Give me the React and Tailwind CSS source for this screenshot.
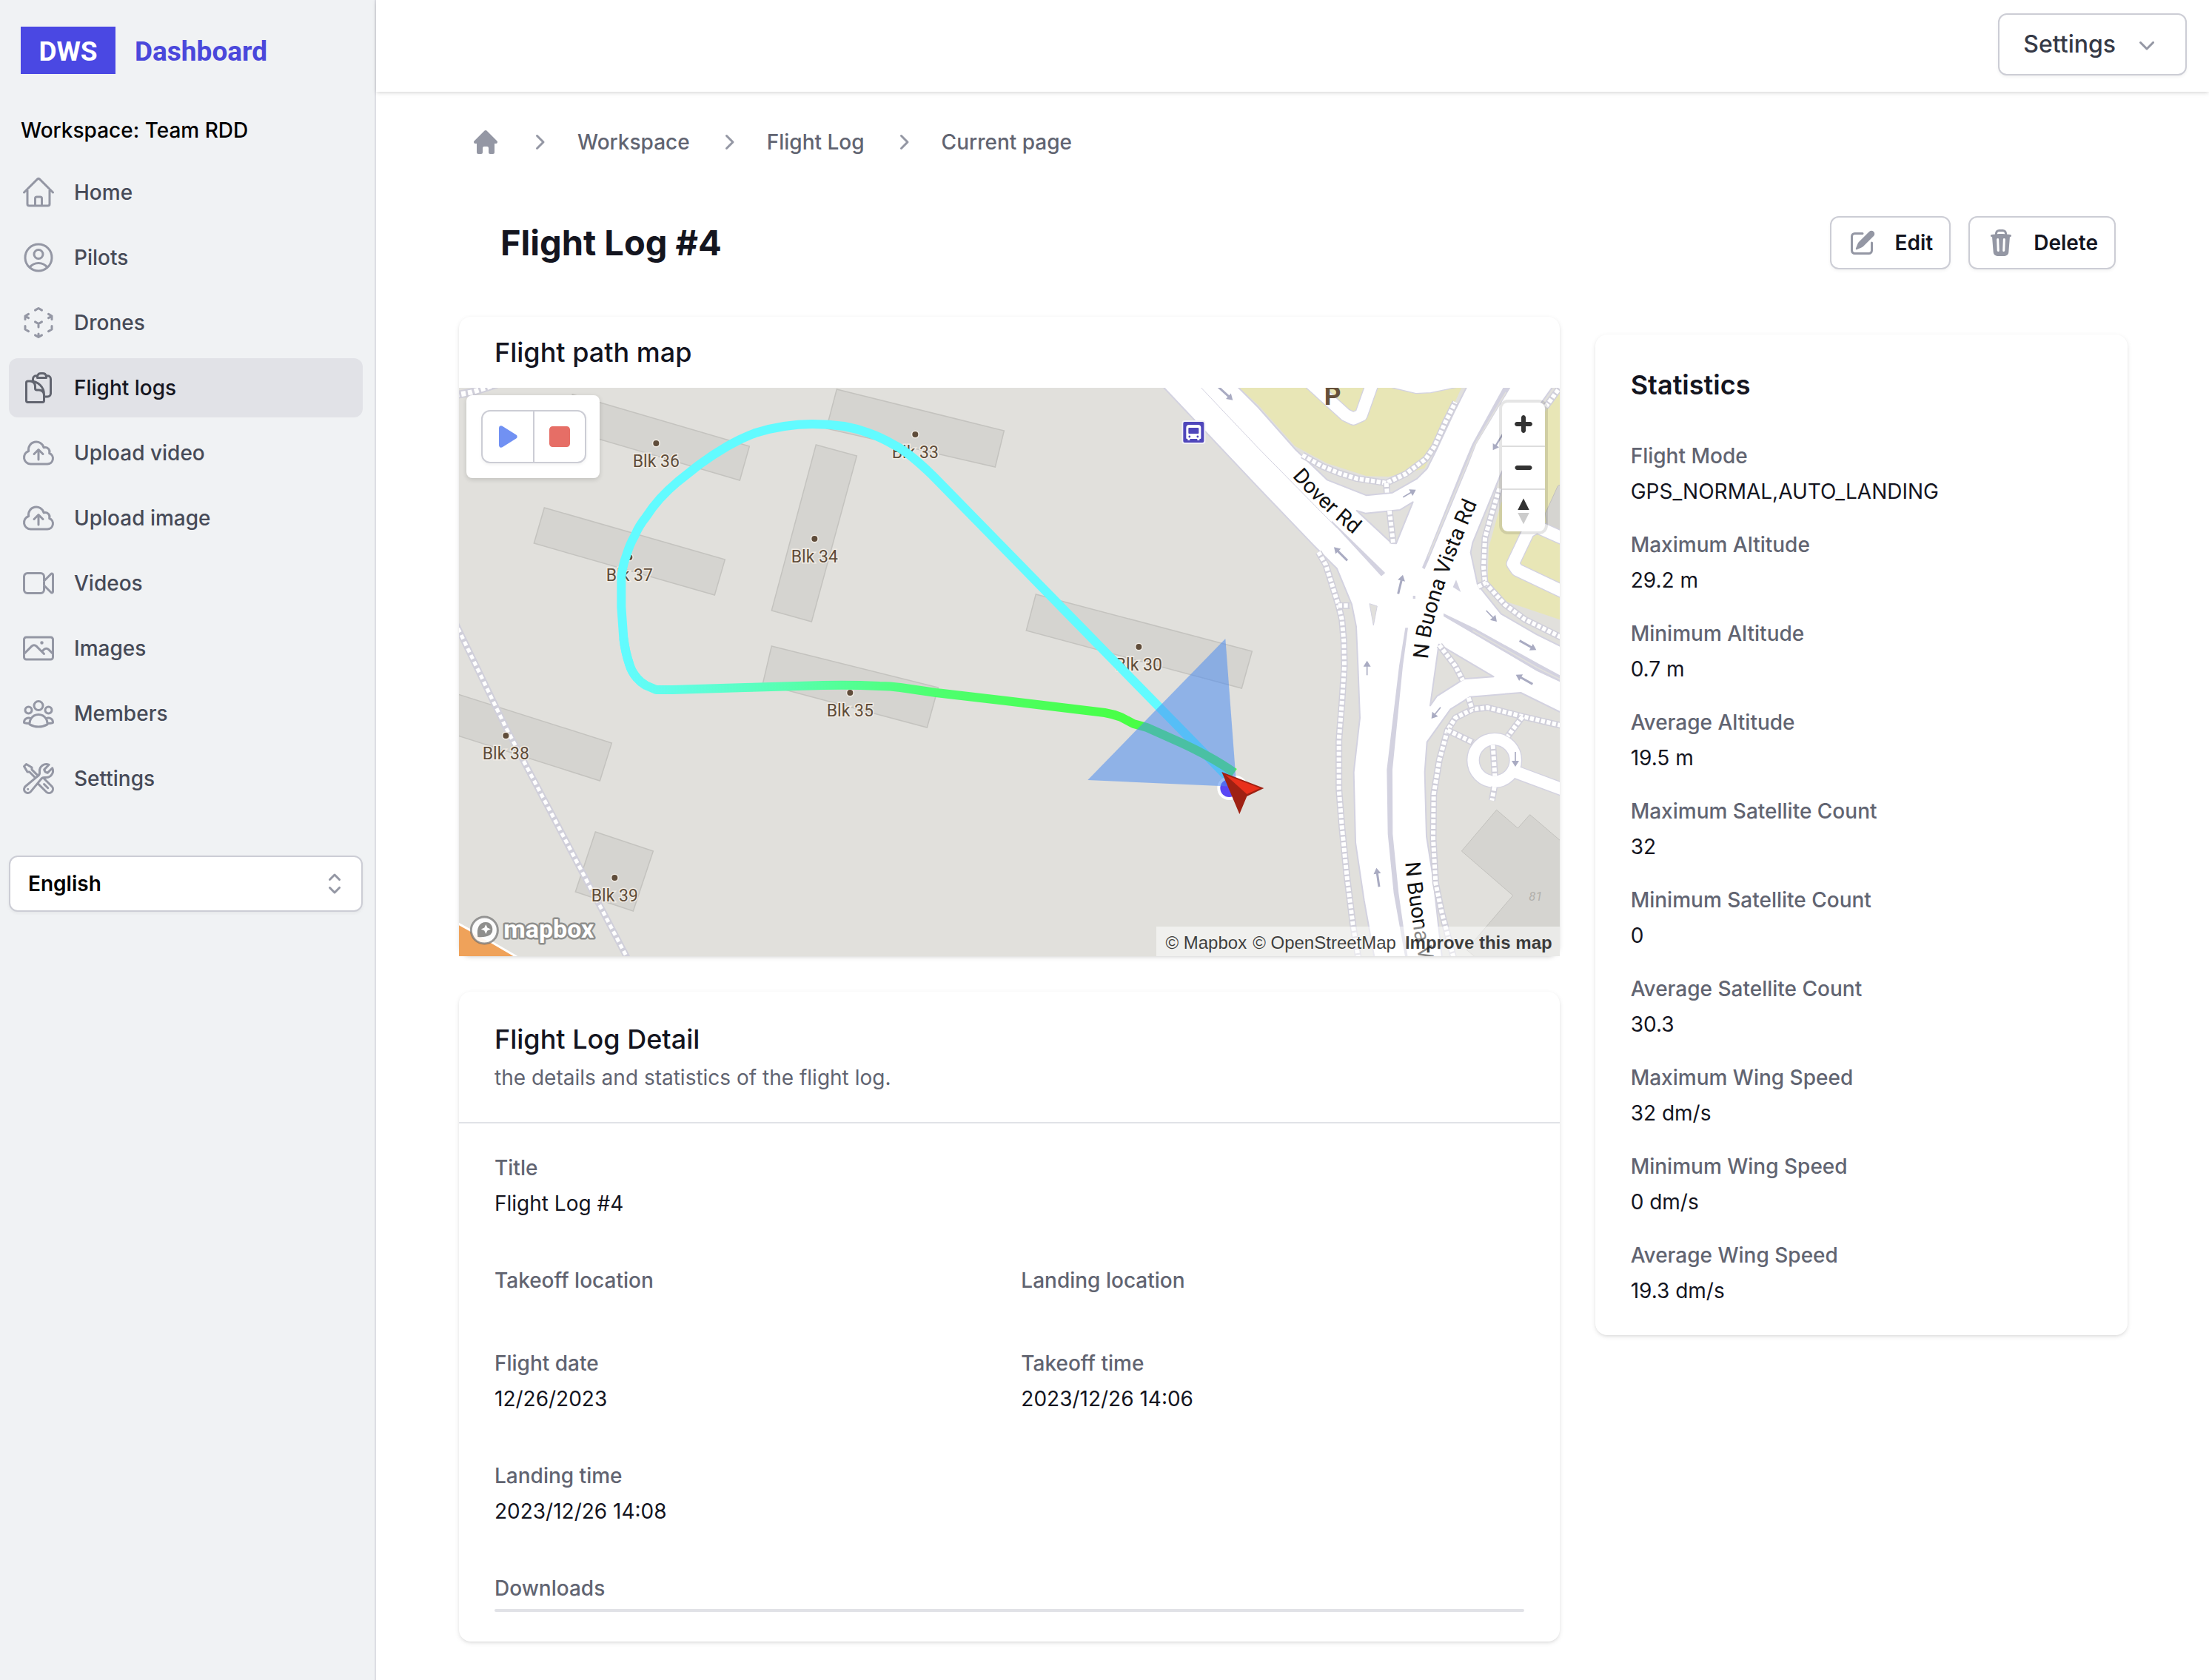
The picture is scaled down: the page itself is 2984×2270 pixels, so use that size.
import React from "react";
import {
  HiOutlineHome,
  HiOutlineUserCircle,
  HiOutlineCubeTransparent,
  HiOutlineClipboardDocument,
  HiOutlineCloudArrowUp,
  HiOutlineVideoCamera,
  HiOutlinePhoto,
  HiOutlineUserGroup,
  HiOutlineWrenchScrewdriver,
  HiMiniHome,
  HiMiniChevronRight,
  HiMiniChevronDown,
  HiMiniChevronUpDown,
  HiMiniPencilSquare,
  HiMiniTrash,
  HiMiniPlay,
  HiMiniStop,
} from "react-icons/hi2";

const navItems = [
  { label: "Home", Icon: HiOutlineHome },
  { label: "Pilots", Icon: HiOutlineUserCircle },
  { label: "Drones", Icon: HiOutlineCubeTransparent },
  { label: "Flight logs", Icon: HiOutlineClipboardDocument, active: true },
  { label: "Upload video", Icon: HiOutlineCloudArrowUp },
  { label: "Upload image", Icon: HiOutlineCloudArrowUp },
  { label: "Videos", Icon: HiOutlineVideoCamera },
  { label: "Images", Icon: HiOutlinePhoto },
  { label: "Members", Icon: HiOutlineUserGroup },
  { label: "Settings", Icon: HiOutlineWrenchScrewdriver },
];

const stats = [
  ["Flight Mode", "GPS_NORMAL,AUTO_LANDING"],
  ["Maximum Altitude", "29.2 m"],
  ["Minimum Altitude", "0.7 m"],
  ["Average Altitude", "19.5 m"],
  ["Maximum Satellite Count", "32"],
  ["Minimum Satellite Count", "0"],
  ["Average Satellite Count", "30.3"],
  ["Maximum Wing Speed", "32 dm/s"],
  ["Minimum Wing Speed", "0 dm/s"],
  ["Average Wing Speed", "19.3 dm/s"],
];

const details = [
  { label: "Title", value: "Flight Log #4", wide: true },
  { label: "Takeoff location", value: "" },
  { label: "Landing location", value: "" },
  { label: "Flight date", value: "12/26/2023" },
  { label: "Takeoff time", value: "2023/12/26 14:06" },
  { label: "Landing time", value: "2023/12/26 14:08", wide: true },
];

function Sidebar() {
  return (
    <aside className="flex w-[508px] shrink-0 flex-col border-r-2 border-[#dddee3] bg-[#f0f2f4] pt-9">
      <a href="#" className="flex items-center gap-[26px] pl-7 font-[Roboto,sans-serif] text-[37px] leading-[60px] font-bold">
        <span className="flex h-16 w-32 items-center justify-center bg-[#4a48e3] pt-1 text-white">DWS</span>
        <span className="pt-1 text-[#4a48db]">Dashboard</span>
      </a>
      <p className="mt-14 pl-7 text-[28px] leading-10 font-medium text-black">Workspace: Team RDD</p>
      <nav className="mt-6 flex flex-col gap-2 pr-4 pl-3">
        {navItems.map(({ label, Icon, active }) => (
          <a
            key={label}
            href="#"
            className={
              active
                ? "flex h-20 items-center gap-6 rounded-xl bg-[#e1e2e7] px-4 text-[28px] font-medium text-[#14151f]"
                : "flex h-20 items-center gap-6 rounded-xl px-4 text-[28px] font-medium text-[#464a57]"
            }
          >
            <Icon className={active ? "size-12 text-[#61646f]" : "size-12 text-[#9497a4]"} />
            {label}
          </a>
        ))}
      </nav>
      <div className="relative mt-16 mr-4 ml-3">
        <select
          aria-label="Language"
          className="h-[76px] w-full appearance-none rounded-xl border-2 border-[#cccdd5] bg-white px-6 text-[28px] font-semibold text-black shadow-[0_2px_4px_rgba(0,0,0,0.05)]"
        >
          <option>English</option>
        </select>
        <HiMiniChevronUpDown className="pointer-events-none absolute top-[18px] right-[18px] size-10 text-[#9497a4]" />
      </div>
    </aside>
  );
}

const buildings = [
  "154,9 393,79 380,125 141,55",
  "511,2 737,58 725,107 497,55",
  "483,77 538,92 477,316 423,301",
  "116,162 360,232 346,280 102,210",
  "-4,413 207,480 191,531 -4,469",
  "423,349 648,405 633,459 411,400",
  "185,600 263,626 236,707 158,681",
  "780,279 1072,356 1058,406 767,328",
];

const blocks = [
  ["Blk 36", 267, 75],
  ["Blk 33", 617, 63],
  ["Blk 34", 481, 204],
  ["Blk 37", 231, 229],
  ["Blk 38", 64, 470],
  ["Blk 35", 529, 412],
  ["Blk 39", 211, 662],
  ["Blk 30", 919, 350],
];

const footways = [
  "180,345 260,390 330,418 400,440 520,458 600,420 680,360 715,310 760,210 800,130",
  "520,458 523,497",
  "533,570 548,702",
  "245,738 275,790 300,870 325,950 340,1010 348,1100 350,1200 340,1350 328,1500 328,1700 340,1850 360,2050 385,2250 408,2390",
  "325,955 372,955",
  "978,480 945,590 920,680 914,800 920,862 1000,950 1080,1010 1230,1084",
  "892,878 925,862",
  "735,1115 800,1200 830,1258",
  "1230,1441 1075,1405 930,1368 870,1375 800,1410 768,1460 735,1580 712,1720 710,1900 720,2080 745,2200 795,2390",
  "853,1328 868,1375",
  "1072,1405 1012,1485",
  "768,1460 872,1510",
  "952,1520 960,1645",
  "958,1690 948,1745",
  "1230,62 1165,150",
];

const arrows = [
  [588, 515, 640, 485, 5],
  [362, 772, 308, 718, 9],
  [568, 907, 587, 830, 9],
  [992, 260, 952, 325, 7],
  [442, 1237, 442, 1178, 5],
  [925, 975, 968, 1020, 5],
  [1060, 1097, 1128, 1135, 9],
  [1113, 1273, 1045, 1235, 9],
  [740, 1367, 703, 1413, 5],
  [1043, 1548, 1043, 1608, 5],
  [491, 2095, 480, 2018, 9],
  [-170, 60, -102, 122, 9],
];

const roadOutline =
  "M-392,60 L0,475 L225,710 L320,805 L380,950 L398,1040 L405,1200 L413,1410 L388,1630 L395,1915 L430,2150 L475,2400 L748,2400 L710,2060 L683,1890 L676,1630 L685,1508 L780,1375 L860,1325 L1065,1308 L1240,1394 L1240,1126 L1130,1072 L985,988 L890,870 L862,740 L870,700 L985,420 L1060,270 L1150,130 L1200,60 L850,60 L795,170 L720,330 L685,400 L645,440 L545,497 L440,508 L280,445 L150,320 L0,150 L-90,60 Z";

function RoadArrow({ a }) {
  const [x1, y1, x2, y2, w] = a;
  const angle = (Math.atan2(y2 - y1, x2 - x1) * 180) / Math.PI;
  const length = Math.hypot(x2 - x1, y2 - y1);
  return (
    <g transform={`translate(${x2} ${y2}) rotate(${angle})`}>
      <path d={`M${-length},0 H-16`} stroke="#a9abc2" strokeWidth={w} />
      <path d="M0,0 L-24,-15 L-24,15 Z" fill="#a9abc2" />
    </g>
  );
}

function Roads() {
  return (
    <g transform="translate(1080 -24) scale(0.33333)" fill="none" strokeLinejoin="round">
      <path d="M-90,60 L0,140 L150,308 L280,378 L440,430 L530,432 L640,408 L675,398 L720,300 L780,170 L830,60 Z" fill="#e8e6b6" />
      <path d="M1230,70 L1165,165 L985,540 L935,720 L930,870 L1010,940 L1230,1014 Z" fill="#e8e6b6" />
      <path d="M1230,462 L1215,470 L1165,580 L1170,630 L1230,655 Z" fill="#d5d4d0" stroke="#c2c1bd" strokeWidth="3" />
      <path d="M530,60 L545,72 L640,95 L700,92 L825,66 Z" fill="#fff" stroke="#d3d2e0" strokeWidth="4" />
      <g strokeLinejoin="round">
        <path d="M210,50 L355,182 L386,197 L418,183 L465,50" stroke="#d3d2e0" strokeWidth="56" />
        <path d="M210,50 L355,182 L386,197 L418,183 L465,50" stroke="#fff" strokeWidth="48" />
        <path d="M1240,684 L1130,635 L1095,655 L1033,785 L1050,810 L1240,900" stroke="#d3d2e0" strokeWidth="56" />
        <path d="M1240,684 L1130,635 L1095,655 L1033,785 L1050,810 L1240,900" stroke="#fff" strokeWidth="48" />
      </g>
      <path d={roadOutline} fill="#fff" stroke="#d3d2e0" strokeWidth="6" />
      <g stroke="#d3d2e0" strokeWidth="6" fill="#e1e0dc">
        <path d="M400,570 L435,581 L575,567 L628,535 L560,703 L542,702 Z" />
        <path d="M733,1112 L955,1243 L835,1252 L725,1322 L698,1360 Z" />
        <path d="M452,947 L483,957 L468,1035 Z" strokeWidth="3" />
      </g>
      <path d="M803,850 L790,880 L822,900 Z" fill="#d3d2e0" />
      <path d="M-230,72 L0,315 L320,640" stroke="#d3d2e0" strokeWidth="3" />
      <path d="M300,615 L512,822 L500,832 Z" fill="#d3d2e0" stroke="#d3d2e0" strokeWidth="5" />
      <path d="M1030,60 L885,300 L850,390 L690,775 L675,808 L665,800 L680,765 L830,390 L868,300 L1000,60 Z" fill="#d3d2e0" />
      <path d="M1005,90 L880,300 L845,385 L690,755" stroke="#e1e0dc" strokeWidth="5" />
      <path d="M752,986 L880,1048 L1140,1192 L1240,1246 L1240,1272 L1130,1220 L875,1070 L752,998 Z" fill="#d3d2e0" />
      <path d="M870,1056 L1130,1205 L1230,1256" stroke="#e1e0dc" strokeWidth="5" />
      <path d="M597,1045 L608,1045 L587,1200 L545,1620 L546,1880 L570,2120 L610,2400 L600,2400 L550,2120 L526,1880 L522,1620 L572,1200 Z" fill="#d3d2e0" />
      <path d="M628,915 h10 v12 h-10 Z" fill="#d3d2e0" />

      <path d="M1040,1628 L1240,1702" stroke="#d3d2e0" strokeWidth="56" />
      <circle cx="958" cy="1582" r="86" stroke="#d3d2e0" strokeWidth="54" />
      <circle cx="958" cy="1582" r="86" stroke="#fff" strokeWidth="46" />
      <path d="M1030,1624 L1240,1702" stroke="#fff" strokeWidth="48" />

      <path
        d="M967,1783 L1053,1857 L1102,1802 L1240,1920 L1240,2400 L905,2400 L845,2350 L1033,2130 L825,1950 Z"
        fill="#d5d4d0"
        stroke="#c2c1bd"
        strokeWidth="3"
      />
      {footways.map((p) => (
        <g key={p}>
          <polyline points={p} stroke="#d0cfda" strokeWidth="27" />
          <polyline points={p} stroke="#fff" strokeWidth="18" strokeDasharray="16 7" />
        </g>
      ))}
      {arrows.map((a) => (
        <RoadArrow key={a.join()} a={a} />
      ))}

      <path id="doverRoad" d="M138,431 Q250,560 420,692" />
      <path id="buonaVistaUp" d="M688,1172 L696,1100 Q725,900 915,480" />
      <path id="buonaVistaDown" d="M597,1996 L607,2100 L640,2330 L720,2700" />
      <g
        fill="#111"
        stroke="#fff"
        strokeWidth="8"
        style={{ paintOrder: "stroke" }}
        className="font-[Roboto,sans-serif] text-[86px]"
      >
        <text>
          <textPath href="#doverRoad">Dover Rd</textPath>
        </text>
        <text>
          <textPath href="#buonaVistaUp">N Buona Vista Rd</textPath>
        </text>
        <text>
          <textPath href="#buonaVistaDown">N Buona Vista Rd</textPath>
        </text>
      </g>
      <text x="268" y="140" fill="#65503a" className="font-[Roboto,sans-serif] text-[106px] font-bold">
        P
      </text>
      <text x="1098" y="2150" fill="#b0afab" className="font-[Roboto,sans-serif] text-[50px] italic">
        81
      </text>
    </g>
  );
}

function FlightMap() {
  return (
    <svg
      viewBox="0 0 1488 768"
      preserveAspectRatio="xMidYMid slice"
      className="block h-[768px] w-full"
      role="img"
      aria-label="Flight path"
    >
      <defs>
        <linearGradient id="altitude" gradientUnits="userSpaceOnUse" x1="220" y1="0" x2="900" y2="0">
          <stop offset="0" stopColor="#62fbff" />
          <stop offset="0.1" stopColor="#60fde6" />
          <stop offset="0.42" stopColor="#54ff9a" />
          <stop offset="0.62" stopColor="#4eff70" />
          <stop offset="1" stopColor="#48ff46" />
        </linearGradient>
      </defs>
      <rect width="1488" height="768" fill="#e1e0dc" />
      {buildings.map((p) => (
        <polygon key={p} points={p} fill="#d5d4d0" stroke="#c4c3bf" strokeWidth="1.5" />
      ))}
      <Roads />
      <g fill="none">
        <polyline points="-5,10 18,6 52,-5" stroke="#d0cfda" strokeWidth="11" />
        <polyline points="-5,10 18,6 52,-5" stroke="#fff" strokeWidth="7" strokeDasharray="6 3" />
        <polyline points="-5,316 64,459 125,574 232,778" stroke="#d0cfda" strokeWidth="9" />
        <polyline points="-5,316 64,459 125,574 232,778" stroke="#fff" strokeWidth="5" strokeDasharray="6 4" />
      </g>
      <path d="M-4,722 L43,748 L84,772 L-4,772 Z" fill="#efa25a" stroke="#fff" strokeWidth="3" />

      {blocks.map(([name, x, y]) => (
        <g key={name} stroke="#f1ece5" strokeWidth="3" fill="#5f4c3a" style={{ paintOrder: "stroke" }}>
          <circle cx={x} cy={y} r="4" />
          <text x={x} y={y + 32} textAnchor="middle" className="font-[Roboto,sans-serif] text-[23px]">
            {name}
          </text>
        </g>
      ))}

      <g>
        <rect x="978" y="45" width="30" height="30" rx="3" fill="#4f46bb" stroke="#f1f0f6" strokeWidth="2" />
        <path
          d="M987,50 h12 q4,0 4,4 v14 q0,1 -1,1 h-1 v2 h-3 v-2 h-10 v2 h-3 v-2 h-1 q-1,0 -1,-1 v-14 q0,-4 4,-4 Z"
          fill="#fff"
        />
        <rect x="986" y="54" width="14" height="8" rx="1" fill="#4f46bb" />
        <circle cx="987.5" cy="66" r="1.4" fill="#4f46bb" />
        <circle cx="998.5" cy="66" r="1.4" fill="#4f46bb" />
      </g>

      <g fill="none" strokeWidth="12" strokeLinejoin="round">
        <path
          d="M1045,532 L640,118 Q607,86 588,77 Q571,67 554,61 Q538,55 521,52 Q500,49 478,49 Q459,49 440,52 Q420,55 401,61 Q382,68 363,79 Q344,90 325,104 L296,127 Q284,137 272,150 Q262,161 253,175 Q244,186 238,200 Q231,212 227,226 Q222,239 220,255 L220,296 L223,338 Q225,356 231,374 Q234,384 241,392 Q246,398 253,402"
          stroke="#62fbff"
        />
        <path
          d="M223,338 Q225,356 231,374 Q234,384 241,392 Q246,398 253,402 L267,408 L289,408 L387,405 L492,402 Q530,401 569,403 Q583,403 597,405 L645,412 L740,423 L873,439 Q885,441 895,445 L912,454 L930,459 L977,480 Q1020,500 1048,520"
          stroke="url(#altitude)"
        />
      </g>
      <circle cx="1041" cy="541" r="16" fill="#fff" />
      <circle cx="1050" cy="540" r="16" fill="#fff" />
      <circle cx="1041" cy="541" r="12" fill="#5a47f5" />
      <polygon points="1036,339 850,530 1051,539" fill="#4c8df0" fillOpacity="0.55" />
      <polygon points="1031,519 1088,541 1065,552 1055,576" fill="#9f2113" />
      <polygon points="1036,523 1083,541 1065,549" fill="#e9301b" />

      <g>
        <circle cx="35" cy="733" r="18" fill="#fff" fillOpacity="0.9" stroke="#6f6f6f" strokeOpacity="0.7" strokeWidth="3" />
        <path
          d="M26,742 C24,730 28,722 37,722 C43,722 46,727 46,732 C46,740 38,743 26,742 Z"
          fill="#8f8f8d"
        />
        <path d="M37,725 l2,4.5 4.5,2 -4.5,2 -2,4.5 -2,-4.5 -4.5,-2 4.5,-2 Z" fill="#fff" />
        <text
          x="61"
          y="743"
          fill="#fff"
          stroke="#8f8f8d"
          strokeWidth="5"
          strokeLinejoin="round"
          style={{ paintOrder: "stroke" }}
          className="font-[Roboto,sans-serif] text-[34px] font-bold"
        >
          mapbox
        </text>
      </g>
    </svg>
  );
}

function MapControls() {
  return (
    <>
      <div className="absolute top-[10px] left-[10px] rounded-lg bg-white py-5 pr-[18px] pl-5 shadow-[0_2px_6px_rgba(0,0,0,0.15)]">
        <div className="flex h-[72px] w-[142px] divide-x-2 divide-[#cccdd5] rounded-xl border-2 border-[#cccdd5] shadow-[0_2px_4px_rgba(0,0,0,0.05)]">
          <button aria-label="Play" className="flex flex-1 items-center justify-center">
            <HiMiniPlay className="size-10 text-[#7191f3]" />
          </button>
          <button aria-label="Stop" className="flex flex-1 items-center justify-center">
            <HiMiniStop className="size-10 text-[#e66e66]" />
          </button>
        </div>
      </div>
      <div className="absolute top-5 right-5 w-[58px] rounded-lg bg-white shadow-[0_0_0_4px_rgba(0,0,0,0.1)]">
        <button aria-label="Zoom in" className="block h-[58px] w-full">
          <svg viewBox="0 0 29 29" fill="#333" className="size-full">
            <path d="M14.5 8.5c-.75 0-1.5.75-1.5 1.5v3h-3c-.75 0-1.5.75-1.5 1.5S9.25 16 10 16h3v3c0 .75.75 1.5 1.5 1.5S16 19.75 16 19v-3h3c.75 0 1.5-.75 1.5-1.5S19.75 13 19 13h-3v-3c0-.75-.75-1.5-1.5-1.5z" />
          </svg>
        </button>
        <button aria-label="Zoom out" className="block h-[58px] w-full border-t-2 border-[#dddddd]">
          <svg viewBox="0 0 29 29" fill="#333" className="size-full">
            <path d="M10 13c-.75 0-1.5.75-1.5 1.5S9.25 16 10 16h9c.75 0 1.5-.75 1.5-1.5S19.75 13 19 13h-9z" />
          </svg>
        </button>
        <button aria-label="Reset bearing" className="block h-[58px] w-full border-t-2 border-[#dddddd]">
          <svg viewBox="0 0 29 29" className="size-full">
            <path d="M10.5 14l4-8 4 8h-8z" fill="#333" />
            <path d="M10.5 16l4 8 4-8h-8z" fill="#ccc" />
          </svg>
        </button>
      </div>
      <div className="absolute right-0 bottom-0 flex h-10 items-center gap-2 bg-white/50 pt-1 pr-[10px] pl-3 font-['Liberation_Sans',Arial,sans-serif] text-2xl text-black/75">
        <a href="#">© Mapbox</a>
        <a href="#">© OpenStreetMap</a>
        <a href="#" className="ml-1 font-bold">
          Improve this map
        </a>
      </div>
    </>
  );
}

function Card({ className, children }) {
  return (
    <section
      className={
        "rounded-2xl bg-white shadow-[0_2px_6px_rgba(0,0,0,0.1),0_2px_4px_-2px_rgba(0,0,0,0.1)] " + (className || "")
      }
    >
      {children}
    </section>
  );
}

function Field({ label, value, wide }) {
  return (
    <div className={wide ? "col-span-2" : ""}>
      <dt className="font-medium text-[#616471]">{label}</dt>
      <dd className="mt-2 text-[#14151f]">{value}</dd>
    </div>
  );
}

function ActionButton({ Icon, children }) {
  return (
    <button className="flex h-[72px] items-center gap-6 rounded-xl border-2 border-[#cccdd5] bg-white px-[22px] text-[28px] font-semibold text-[#14151f] shadow-[0_2px_4px_rgba(0,0,0,0.05)]">
      <Icon className="size-10 text-[#9497a4]" />
      {children}
    </button>
  );
}

export default function App() {
  return (
    <div className="flex min-h-screen bg-white font-[Inter,sans-serif]">
      <Sidebar />
      <div className="min-w-0 flex-1">
        <header className="flex h-[124px] items-start justify-end bg-white pt-[18px] pr-[30px] shadow-[0_2px_6px_rgba(0,0,0,0.1),0_2px_4px_-2px_rgba(0,0,0,0.1)]">
          <button className="flex h-[84px] items-center gap-[22px] rounded-xl border-2 border-[#cccdd5] bg-white px-8 text-[32px] font-medium text-[#353946] shadow-[0_2px_4px_rgba(0,0,0,0.05)]">
            Settings
            <HiMiniChevronDown className="size-10 text-[#9497a4]" />
          </button>
        </header>
        <main className="pt-12 pr-[110px] pb-[52px] pl-28">
          <nav aria-label="Breadcrumb" className="pl-4">
            <ol className="flex items-center gap-8 text-[28px] leading-10 font-medium text-[#616471]">
              <li>
                <a href="#" aria-label="Home">
                  <HiMiniHome className="size-10 text-[#9497a4]" />
                </a>
              </li>
              {["Workspace", "Flight Log", "Current page"].map((crumb) => (
                <li key={crumb} className="flex items-center gap-8">
                  <HiMiniChevronRight className="size-10 text-[#9497a4]" />
                  <a href="#">{crumb}</a>
                </li>
              ))}
            </ol>
          </nav>
          <div className="mt-20 flex items-center justify-between pr-4 pl-14">
            <h1 className="text-[47px] leading-[48px] font-bold text-[#14151f]">Flight Log #4</h1>
            <div className="flex gap-6">
              <ActionButton Icon={HiMiniPencilSquare}>Edit</ActionButton>
              <ActionButton Icon={HiMiniTrash}>Delete</ActionButton>
            </div>
          </div>
          <div className="mt-16 grid grid-cols-3 items-start gap-12">
            <div className="col-span-2 flex flex-col gap-12">
              <Card>
                <h2 className="flex h-24 items-center px-12 text-4xl font-medium text-[#14151f]">Flight path map</h2>
                <div className="relative overflow-hidden">
                  <FlightMap />
                  <MapControls />
                </div>
              </Card>
              <Card>
                <div className="px-12 py-10">
                  <h2 className="text-4xl leading-[48px] font-medium text-[#14151f]">Flight Log Detail</h2>
                  <p className="mt-2 text-[28px] leading-10 text-[#616471]">
                    the details and statistics of the flight log.
                  </p>
                </div>
                <div className="border-t-2 border-[#e1e2e7] px-12 py-10 text-[28px] leading-10">
                  <dl className="grid grid-cols-2 gap-x-8 gap-y-16">
                    {details.map((d) => (
                      <Field key={d.label} {...d} />
                    ))}
                    <div className="col-span-2">
                      <dt className="font-medium text-[#616471]">Downloads</dt>
                      <dd className="mt-2 rounded-sm border-2 border-[#e1e2e7]" />
                    </div>
                  </dl>
                </div>
              </Card>
            </div>
            <Card className="mt-6 px-12 py-10">
              <h2 className="text-4xl leading-[56px] font-semibold text-[#14151f]">Statistics</h2>
              <dl className="mt-12 flex flex-col gap-8 text-[28px] leading-10">
                {stats.map(([label, value]) => (
                  <Field key={label} label={label} value={value} />
                ))}
              </dl>
            </Card>
          </div>
        </main>
      </div>
    </div>
  );
}
